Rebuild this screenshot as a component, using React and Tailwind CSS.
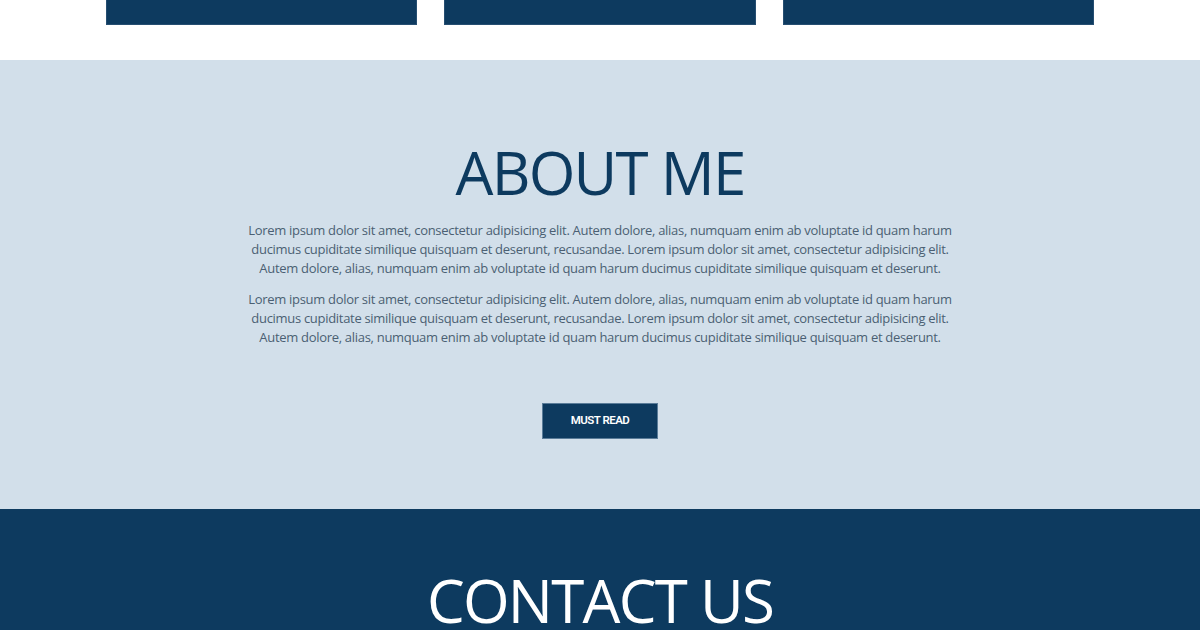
const lorem =
  'Lorem ipsum dolor sit amet, consectetur adipisicing elit. Autem dolore, alias, numquam enim ab voluptate id quam harum ducimus cupiditate similique quisquam et deserunt, recusandae. Lorem ipsum dolor sit amet, consectetur adipisicing elit. Autem dolore, alias, numquam enim ab voluptate id quam harum ducimus cupiditate similique quisquam et deserunt.';

const App = () => {
  return (
    <div className="w-full font-['Open_Sans',sans-serif]">
      {/* bottom edge of the service cards */}
      <section className="bg-white pb-[35px]">
        <div className="mx-auto grid w-[988px] grid-cols-3 gap-[27px]">
          <div className="h-[25px] bg-[#0d3a5f] border-b border-x border-[#4d6f8c]/40" />
          <div className="h-[25px] bg-[#0d3a5f] border-b border-x border-[#4d6f8c]/40" />
          <div className="h-[25px] bg-[#0d3a5f] border-b border-x border-[#4d6f8c]/40" />
        </div>
      </section>

      <section className="bg-[#d2dfea] pt-[79px] pb-[70px] text-center">
        <h2 className="m-0 text-[60px] leading-[66px] font-normal tracking-[-1.75px] text-[#0d3a5f]">ABOUT ME</h2>
        <div className="mx-auto mt-4 w-[710px] text-[13px] leading-[19px] tracking-[-0.3px] text-[#4b5f73]">
          <p className="mb-3">{lorem}</p>
          <p>{lorem}</p>
        </div>
        <button className="mt-[56px] h-[36px] w-[116px] border border-[#5a7c99] bg-[#0d3a5f] font-['Roboto',sans-serif] text-[11.5px] font-semibold tracking-[-0.5px] text-white">
          MUST READ
        </button>
      </section>

      <section className="bg-[#0d3a5f] pt-[58px] pb-16 text-center">
        <h2 className="m-0 text-[60px] leading-[66px] font-normal tracking-[-1.75px] text-white">CONTACT US</h2>
      </section>
    </div>
  );
};

export default App;
